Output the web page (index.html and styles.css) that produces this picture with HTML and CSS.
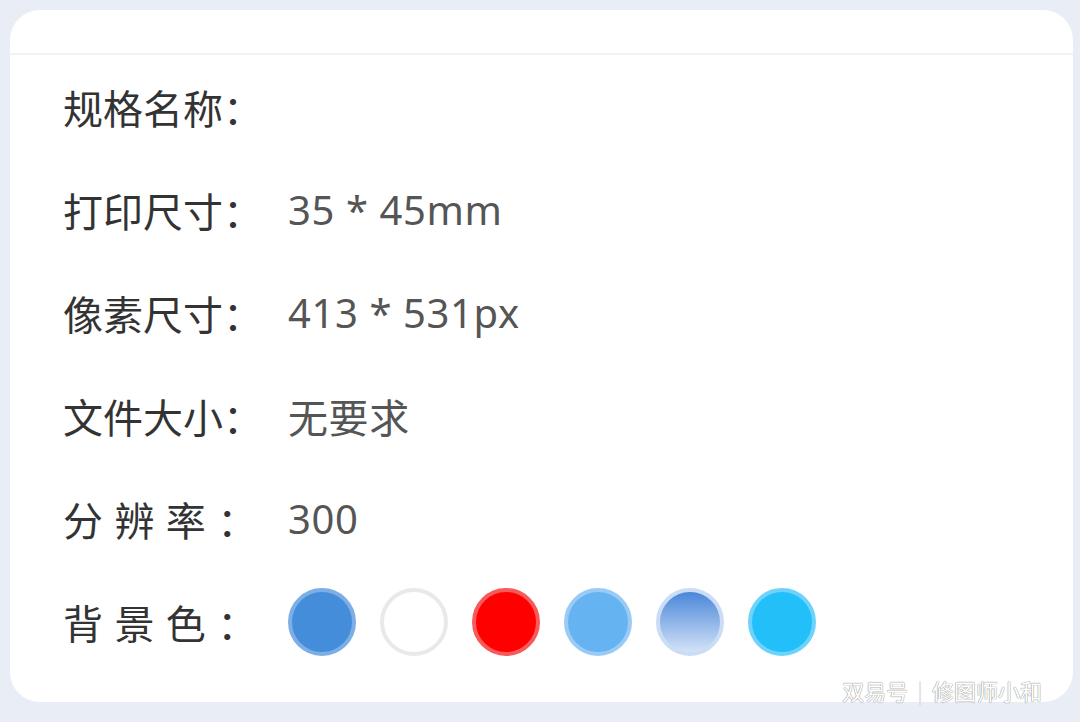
FILE: index.html
```html
<!DOCTYPE html>
<html>
<head>
<meta charset="utf-8" />
<title>规格详情</title>
<link rel="stylesheet" href="styles.css">
</head>
<body>
	<div class="card">
		<div class="card-head"></div>
		<ul class="spec">
			<li><span class="label">规格名称：</span><span class="value"></span></li>
			<li><span class="label">打印尺寸：</span><span class="value">35 * 45mm</span></li>
			<li><span class="label">像素尺寸：</span><span class="value">413 * 531px</span></li>
			<li><span class="label">文件大小：</span><span class="value">无要求</span></li>
			<li><span class="label spaced">分 辨 率 ：</span><span class="value">300</span></li>
			<li>
				<span class="label spaced">背 景 色 ：</span>
				<span class="colors">
					<i class="dot blue"></i>
					<i class="dot white"></i>
					<i class="dot red"></i>
					<i class="dot sky"></i>
					<i class="dot fade"></i>
					<i class="dot cyan"></i>
				</span>
			</li>
		</ul>
	</div>
	<div class="mark">双易号 <b>|</b> 修图师小和</div>
</body>
</html>
```

FILE: styles.css
```css
body{
    margin:0px;
    background:#e9eef6;
    font-family:"Noto Sans","Noto Sans CJK SC",sans-serif;
    position:relative;
    height:722px;
    overflow:hidden;
}
.card{
    margin:10px 7px 0px 10px;
    height:692px;
    background:#fff;
    border-radius:30px;
    overflow:hidden;
}
.card-head{
    height:43px;
    border-bottom:solid 2px #f1f2f4;
}
.spec{
    list-style-type:none;
    margin:0px;
    padding:0px 0px 0px 53px;
}
.spec li{
    height:103px;
    display:flex;
    align-items:center;
}
.label{
    width:225px;
    flex-shrink:0;
    font-size:40px;
    color:#333;
}
.spaced{
    word-spacing:1px;
}
.value{
    font-size:40px;
    letter-spacing:0.6px;
    color:#555;
}
.colors{
    display:flex;
    gap:24px;
}
.dot{
    display:block;
    width:68px;
    height:68px;
    border-radius:50%;
    box-sizing:border-box;
    border:solid 4px;
}
.blue{ background:#448ddb; border-color:#7eaee6; }
.white{ background:#fff; border-color:#e9e9e9; }
.red{ background:#ff0000; border-color:#f75a5a; }
.sky{ background:#66b3f1; border-color:#9acbf4; }
.fade{ background:linear-gradient(#4a87d9,#d3e2f6); border-color:#cbdcf5; }
.cyan{ background:#22bff8; border-color:#6dd3fa; }
.mark{
    position:absolute;
    right:38px;
    bottom:16px;
    font-size:22px;
    color:#fff;
    text-shadow:0 0 1px #888,0 0 1px #888;
    font-family:"Noto Sans CJK SC",sans-serif;
}
.mark b{
    font-weight:normal;
    color:#ddd;
    text-shadow:none;
    margin:0px 4px;
}
```
